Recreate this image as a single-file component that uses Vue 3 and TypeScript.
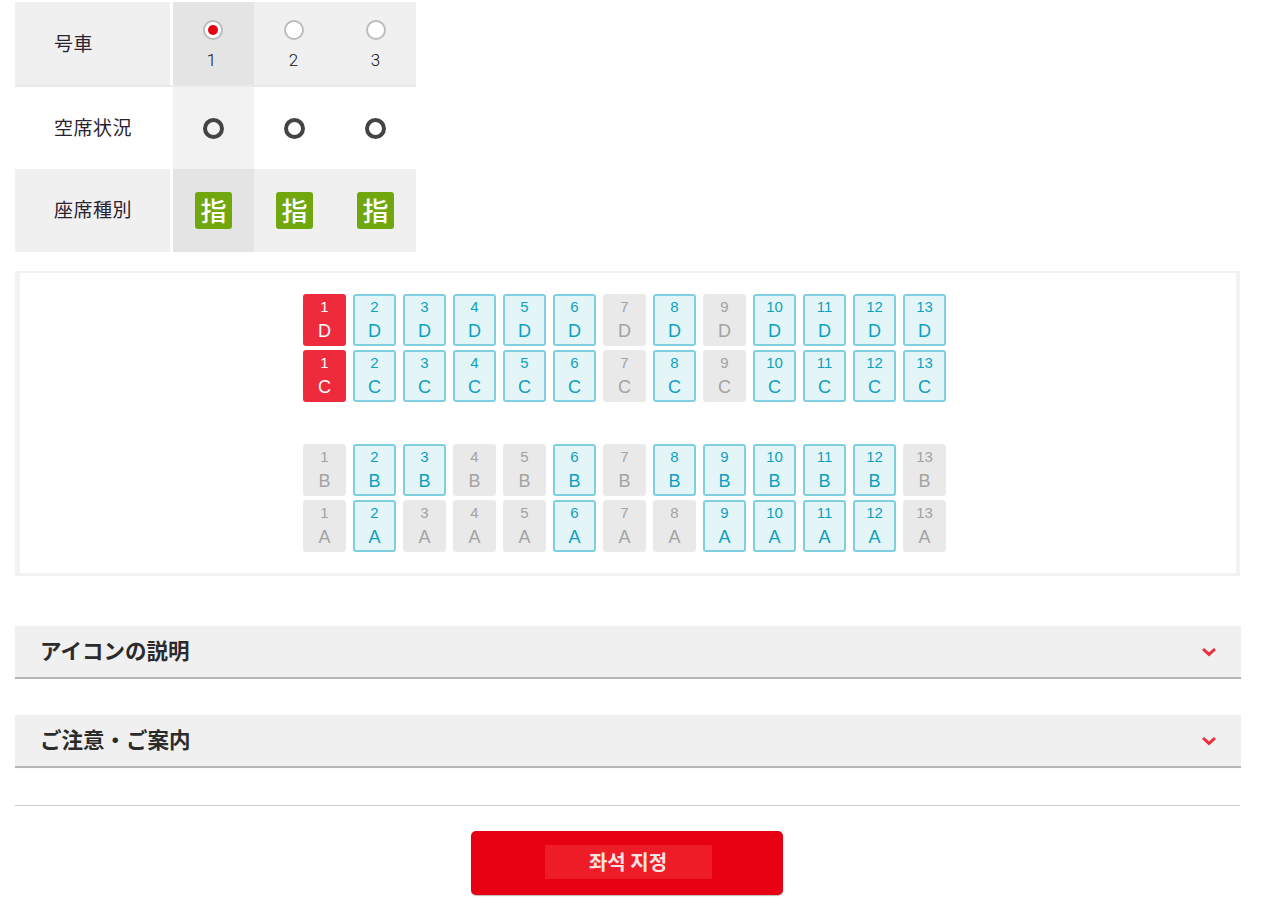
<script setup lang="ts">
interface Seat { num: number; free: boolean; selected: boolean }
interface SeatRow { letter: string; seats: Seat[] }

const cars = [1, 2, 3]
const nums = Array.from({ length: 13 }, (_, i) => i + 1)

function makeRow(letter: string, free: number[], selected: number[] = []): SeatRow {
  return {
    letter,
    seats: nums.map((num) => ({ num, free: free.includes(num), selected: selected.includes(num) })),
  }
}

const upper: SeatRow[] = [
  makeRow('D', [2, 3, 4, 5, 6, 8, 10, 11, 12, 13], [1]),
  makeRow('C', [2, 3, 4, 5, 6, 8, 10, 11, 12, 13], [1]),
]
const lower: SeatRow[] = [
  makeRow('B', [2, 3, 6, 8, 9, 10, 11, 12]),
  makeRow('A', [2, 6, 9, 10, 11, 12]),
]
const sections = ['アイコンの説明', 'ご注意・ご案内']

function seatClass(s: Seat): string {
  if (s.selected) return 'seat selected'
  return s.free ? 'seat free' : 'seat taken'
}
</script>

<template>
  <main class="page">
    <section class="car-table">
      <div class="row row-a">
        <div class="head">号車</div>
        <div v-for="c in cars" :key="c" class="cell cell-car" :class="[{ active: c === 1 }, `car-${c}`]">
          <span class="radio" :class="{ on: c === 1 }"></span>
          <span class="car-no">{{ c }}</span>
        </div>
      </div>
      <div class="row row-b">
        <div class="head">空席状況</div>
        <div v-for="c in cars" :key="c" class="cell" :class="{ active: c === 1 }">
          <span class="vacant"></span>
        </div>
      </div>
      <div class="row row-c">
        <div class="head">座席種別</div>
        <div v-for="c in cars" :key="c" class="cell" :class="{ active: c === 1 }">
          <span class="badge">指</span>
        </div>
      </div>
    </section>

    <section class="map">
      <div class="group">
        <div v-for="r in upper" :key="r.letter" class="seat-row">
          <div v-for="s in r.seats" :key="s.num" :class="seatClass(s)">
            <span class="n">{{ s.num }}</span>
            <span class="l">{{ r.letter }}</span>
          </div>
        </div>
      </div>
      <div class="group">
        <div v-for="r in lower" :key="r.letter" class="seat-row">
          <div v-for="s in r.seats" :key="s.num" :class="seatClass(s)">
            <span class="n">{{ s.num }}</span>
            <span class="l">{{ r.letter }}</span>
          </div>
        </div>
      </div>
    </section>

    <section class="accordions">
      <div v-for="t in sections" :key="t" class="acc">
        <h2>{{ t }}</h2>
        <svg class="chev" width="14" height="10" viewBox="0 0 14 10">
          <path d="M1 2 L7 7.4 L13 2" fill="none" stroke="#ee2e3e" stroke-width="3" />
        </svg>
      </div>
    </section>

    <hr class="rule" />

    <div class="actions">
      <button class="submit" type="button"><span>좌석 지정</span></button>
    </div>
  </main>
</template>

<style>
html, body { margin: 0; background: #fff; }
</style>

<style scoped>
.page {
  width: 1226px;
  height: 896px;
  padding: 2px 0 0 15px;
  font-family: "Liberation Sans", "Noto Sans CJK JP", sans-serif;
  color: #222;
  overflow: hidden;
}
.car-table { width: 401px; }
.row {
  display: grid;
  grid-template-columns: 155px 3px 81px 81px 81px;
  box-sizing: border-box;
}
.row-a { height: 85px; border-bottom: 2px solid #e9e9e9; }
.row-b { height: 82px; }
.row-c { height: 83px; }
.row-a .head, .row-c .head { background: #f0f0f0; }
.row-a .cell, .row-c .cell { background: #f0f0f0; }
.row-a .cell.active, .row-c .cell.active { background: #e4e4e4; }
.row-b .cell.active { background: #f2f2f2; }
.head {
  grid-column: 1;
  display: flex;
  align-items: center;
  padding-left: 39px;
  font-size: 19px;
  letter-spacing: 0.5px;
  font-family: "Noto Sans CJK JP", sans-serif;
  color: #2a2230;
}
.row-a .head { padding-bottom: 3px; }
.row-b .head { padding-bottom: 3px; }
.row-c .head { padding-bottom: 4px; }
.cell {
  display: flex;
  align-items: center;
  justify-content: center;
}
.cell:nth-child(2) { grid-column: 3; }
.cell-car {
  flex-direction: column;
  justify-content: flex-start;
  padding-top: 18px;
}
.car-1 { padding-right: 1px; }
.car-2 { padding-right: 1px; }
.car-1 .car-no { margin-right: 3px; }
.car-2 .car-no { margin-right: 1px; }
.radio {
  box-sizing: border-box;
  width: 20px;
  height: 20px;
  border: 2px solid #bbb;
  border-radius: 50%;
  background: #fff;
  display: flex;
  align-items: center;
  justify-content: center;
}
.radio.on::after {
  content: "";
  width: 10px;
  height: 10px;
  border-radius: 50%;
  background: #e60012;
}
.car-no {
  margin-top: 10px;
  font-family: Roboto, "Liberation Sans", sans-serif;
  font-size: 17px;
  line-height: 20px;
  font-weight: 300;
  color: #111;
}
.vacant {
  box-sizing: border-box;
  width: 21px;
  height: 21px;
  border: 4px solid #444;
  border-radius: 50%;
}
.badge {
  width: 37px;
  height: 37px;
  border-radius: 3px;
  background: #6fa70d;
  color: #fff;
  font-size: 26px;
  line-height: 35px;
  text-align: center;
  font-family: "Noto Sans CJK JP", sans-serif;
  font-weight: 500;
}
.map {
  box-sizing: border-box;
  width: 1225px;
  height: 305px;
  margin-top: 19px;
  border-style: solid;
  border-color: #f2f2f2;
  border-width: 2px 4px 3px 5px;
  padding: 21px 7px 0 0;
  display: flex;
  flex-direction: column;
  align-items: center;
  gap: 42px;
}
.group { display: flex; flex-direction: column; gap: 4px; }
.seat-row { display: flex; gap: 7px; }
.seat {
  box-sizing: border-box;
  width: 43px;
  height: 52px;
  border-radius: 3px;
  display: flex;
  flex-direction: column;
  align-items: center;
  padding-top: 5px;
}
.n { font-size: 15px; line-height: 16px; }
.l { font-size: 18px; line-height: 24px; margin-top: 4px; }
.seat.free {
  background: #e4f5f8;
  border: 2px solid #7fcfe0;
  color: #0f9fc0;
  padding-top: 3px;
}
.seat.taken { background: #e9e9e9; color: #a3a3a3; }
.seat.selected { background: #ee2b3c; color: #fff; }
.accordions {
  margin-top: 50px;
  display: flex;
  flex-direction: column;
  gap: 36px;
  width: 1226px;
}
.acc {
  box-sizing: border-box;
  height: 53px;
  background: #f0f0f0;
  border-bottom: 2px solid #b5b5b5;
  border-radius: 2px 2px 0 0;
  box-shadow: 0 0 1px rgba(0, 0, 0, 0.12);
  display: flex;
  align-items: center;
  justify-content: space-between;
  padding: 0 25px;
}
.acc h2 {
  margin: 0 0 4px;
  font-size: 21.5px;
  line-height: 28px;
  font-weight: 700;
  font-family: "Noto Sans CJK JP", sans-serif;
  color: #2b2b2b;
}
.rule {
  width: 1225px;
  margin: 37px 0 0;
  border: 0;
  border-top: 1px solid #ccc;
}
.actions {
  width: 1225px;
  display: flex;
  justify-content: center;
  margin-top: 25px;
}
.submit {
  width: 312px;
  height: 64px;
  border: 0;
  border-radius: 5px;
  background: #e60012;
  box-shadow: 0 1px 1px #bbb;
  display: flex;
  align-items: center;
  justify-content: center;
  padding: 0;
  margin-right: 1px;
}
.submit span {
  width: 167px;
  height: 34px;
  margin: 0 0 2px 2px;
  background: #ee1c27;
  color: #fbe3e3;
  font-family: "Noto Sans CJK KR", sans-serif;
  font-size: 20px;
  font-weight: 700;
  line-height: 34px;
  text-align: center;
}
</style>
